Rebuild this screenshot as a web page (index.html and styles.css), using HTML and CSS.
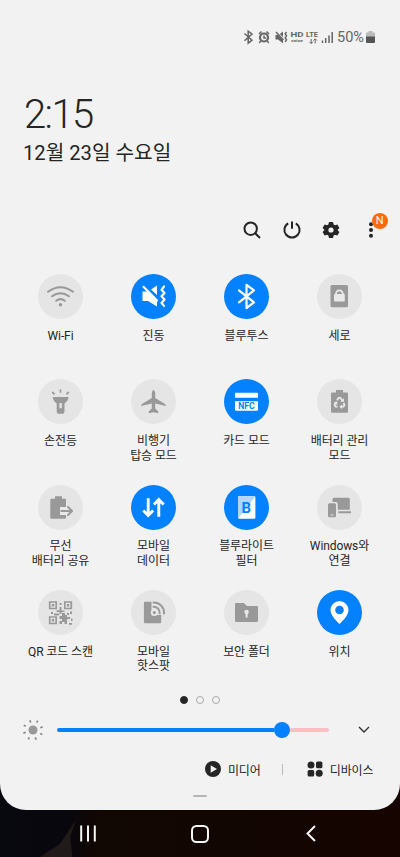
FILE: index.html
```html
<!DOCTYPE html>
<html lang="ko">
<head>
<meta charset="utf-8">
<title>빠른 설정</title>
<link rel="stylesheet" href="styles.css">
</head>
<body>
<div class="screen">
<main class="panel">
  <div class="status">
    <svg class="status-icons" width="93" height="18" viewBox="0 0 93 18" fill="none" stroke="#666" stroke-width="1.5">
      <path d="M1.500 5.500 9 12.200 5.200 15.200V3.200L9 6 1.500 12.800"/>
      <circle cx="21" cy="9.500" r="4" stroke-width="2.200"/><path d="M21 7.500v2.500h2M16 6l2.500-2.500M26 6l-2.500-2.500M17.800 13l-1.500 2M24.200 13l1.500 2"/>
      <path d="M32.500 7H35l5 5v3.200L35 11.500h-2.500zM36.800 6 40 3.500V9z" fill="#666" stroke="none"/><path d="M33 4l7.500 8M43.500 4l-1.300 1.800 1.300 2-1.300 2 1.300 2-1.300 2"/>
      <path d="M68.200 11v4.500M66.500 13.800l1.700 1.700 1.700-1.700M72.200 15.500V11M70.500 12.500l1.700-1.700 1.700 1.700" stroke-width="1"/>
      <path d="M79.500 12.500v2.500M82.700 10v5M86 7.500V15M89.200 4V15"/>
      <text class="tiny-hd" x="47.500" y="9" textLength="13" lengthAdjust="spacingAndGlyphs">HD</text><text class="tiny-voice" x="48" y="13.800" textLength="12" lengthAdjust="spacingAndGlyphs">voice</text>
      <text class="tiny-lte" x="63" y="9" textLength="12" lengthAdjust="spacingAndGlyphs">LTE</text>
    </svg>
    <span class="percent">50%</span>
    <svg width="9" height="13" viewBox="0 0 9 13"><path d="M2.500 0h4v1.500H9V6H0V1.500h2.500z" fill="#bbb"/><path d="M0 5.500h9V11q0 1-1 1H1q-1 0-1-1z" fill="#555"/></svg>
  </div>
  <div class="time">2:15</div>
  <div class="date">12월 23일 수요일</div>
  <nav class="actions">
    <svg viewBox="0 0 20 20"><circle cx="8.700" cy="8.700" r="6.200"/><path d="M13.200 13.200 18 18"/></svg>
    <svg viewBox="0 0 20 20"><path d="M6.200 3.300a7.600 7.600 0 1 0 7.600 0M10 1.500v7.200"/></svg>
    <svg viewBox="0 0 20 20"><path class="solid" fill-rule="evenodd" d="M8 2h4l.6 2.400 1.500.9 2.300-.7 2 3.400-1.700 1.700v.6l1.700 1.700-2 3.400-2.300-.7-1.500.9L12 18H8l-.6-2.400-1.500-.9-2.300.7-2-3.400 1.700-1.700v-.6L1.600 8l2-3.400 2.300.7 1.500-.9zM10 7.400a2.600 2.600 0 1 0 0 5.200 2.600 2.600 0 0 0 0-5.200z"/></svg>
    <div class="more"><svg viewBox="0 0 20 20"><g class="solid"><circle cx="10" cy="4.300" r="2"/><circle cx="10" cy="10" r="2"/><circle cx="10" cy="15.800" r="2"/></g></svg><span class="badge">N</span></div>
  </nav>
  <section class="tiles">
    <div class="tile"><svg class="disc" viewBox="0 0 45 45"><g class="line"><path d="M10 17.700Q22.500 8.700 35 17.700M14 22.300Q22.500 16.200 31 22.300M18.200 26.800Q22.500 23.500 26.800 26.800"/></g><circle cx="22.500" cy="30.700" r="1.700"/></svg><span>Wi-Fi</span></div>
    <div class="tile on"><svg class="disc" viewBox="0 0 45 45"><path d="M11.500 17.500H16l10 9.700v5.300l-9-5.500h-5.500zM20 15.500l6-4V21z"/><path class="line" d="M12.500 12.800 26 26.500M33 12.500l-2.500 3.300L33.500 19l-3 3.300 3 3.300-3 3.300 2.500 3"/></svg><span>진동</span></div>
    <div class="tile on"><svg class="disc" viewBox="0 0 45 45"><path class="line" d="M15 16.300 30 28.300 22.500 34V10.800L30 16.300 15 28.300"/></svg><span>블루투스</span></div>
    <div class="tile"><svg class="disc" viewBox="0 0 45 45"><rect x="13.500" y="11" width="17.500" height="22.200" rx="1.500"/><rect class="cut" x="17" y="20" width="10.800" height="7.500" rx="1"/><path class="cutline" d="M19 21v-1.300a3.400 3.400 0 0 1 6.800 0V21"/></svg><span>세로</span></div>

    <div class="tile"><svg class="disc" viewBox="0 0 45 45"><path fill-rule="evenodd" d="M14.700 18h15.800q0 3.500-4 6.500v8q0 2.200-2 2.200h-3.800q-2 0-2-2.200v-8q-4-3-4-6.500zM21.400 24v5.300h2.400V24z"/><path class="line thin" d="M22.500 11v2M14.600 13.300l1.500 1.600M30.400 13.300l-1.500 1.600"/></svg><span>손전등</span></div>
    <div class="tile"><svg class="disc" viewBox="0 0 45 45"><path d="M22.500 10.800q1.700 1 1.700 3.500V19L34 25q1 .8.800 2L24.200 24.500v5l3 2.700v2l-4.700-1-4.700 1v-2l3-2.700v-5L10.200 27q-.2-1.200.8-2l9.800-6v-4.700q0-2.500 1.700-3.500z"/></svg><span>비행기<br>탑승 모드</span></div>
    <div class="tile on"><svg class="disc" viewBox="0 0 45 45"><path d="M12 13.700h21q1 0 1 1v4.100H11v-4.100q0-1 1-1zM11 22.200h23v8.500q0 1-1 1H12q-1 0-1-1z"/><text class="nfc" x="14.300" y="30.300" textLength="16.400" lengthAdjust="spacingAndGlyphs">NFC</text></svg><span>카드 모드</span></div>
    <div class="tile"><svg class="disc" viewBox="0 0 45 45"><path d="M19 11h7v2.500h4q1 0 1 1v18.200q0 1-1 1H15q-1 0-1-1V14.500q0-1 1-1h4z"/><path class="cutline" d="M20 21.300l1.600-2.500h1.800l2 3M26.500 24l1 1.800-1 1.900h-2.500M20.500 27.700h-2l-1-1.900 1.200-2"/><path class="cut" d="M27 19.300v3.500h-3.700zM25 25.400v4.700l-2.600-2.400zM16.700 23.300l3.400-.8.400 3.400z"/></svg><span>배터리 관리<br>모드</span></div>

    <div class="tile"><svg class="disc" viewBox="0 0 45 45"><path d="M17 11.300h7v2.500h3q1 0 1 1v18q0 1-1 1H13.300q-1 0-1-1v-18q0-1 1-1H17z"/><path class="cut" d="M22 22h8v8h-8z"/><path class="line" d="M23.300 26h10.500M30 22l4 4-4 4"/></svg><span>무선<br>배터리 공유</span></div>
    <div class="tile on"><svg class="disc" viewBox="0 0 45 45"><path class="line heavy" d="M17.200 13.300v16.200M12.300 25.500l4.900 4.900 4.900-4.900M27.800 31.700V15.200M22.900 19.500l4.900-4.900 4.900 4.900"/></svg><span>모바일<br>데이터</span></div>
    <div class="tile on"><svg class="disc" viewBox="0 0 45 45"><rect x="14" y="11.300" width="17.400" height="22.400" rx="1.200"/><path class="pale" d="M15.200 11.300h16.200L14 33.700V12.500q0-1.200 1.200-1.200z"/><text class="letter-b" x="17.600" y="27.600">B</text></svg><span>블루라이트<br>필터</span></div>
    <div class="tile"><svg class="disc" viewBox="0 0 45 45"><path d="M17 12.700h14.300q1.500 0 1.500 1.500v10.500H20.700V19q0-2-2-2h-3.200v-2.800q0-1.500 1.500-1.500zM21.300 26.200H34v2H21.300z"/><path fill-rule="evenodd" d="M12.500 18.300h5q1.500 0 1.500 1.500v11q0 1.500-1.500 1.500h-5q-1.500 0-1.500-1.500v-11q0-1.500 1.500-1.500zM13.500 29.500v1h3v-1z"/></svg><span>Windows와<br>연결</span></div>

    <div class="tile"><svg class="disc" viewBox="0 0 45 45"><path class="qr" d="M11.700 12h6.500v6.500h-6.500zM26.800 12h6.500v6.500h-6.500zM11.700 27h6.500v6.500h-6.500z"/><path d="M13.800 14h2.400v2.400h-2.400zM28.900 14h2.400v2.400h-2.400zM13.800 29h2.400v2.400h-2.400zM21.500 13h2v2h-2zM21.500 17h2v3.500h3V22h-3v2h-2v-2h-3v-1.800h3zM13 22h2v2h-2zM16 23.500h5v2h-5zM24 23h3v2h2v-2h2v2h-2v2h3v2h-3v2h2v2h3v1.800h-3V31h-2v3h-2.500v-2H24v2h-2.500v-3H24v-2h-2.500v-3H24zM32 21.500h2V24h-2zM33 28.500h1.500v2.500H33z"/></svg><span>QR 코드 스캔</span></div>
    <div class="tile"><svg class="disc" viewBox="0 0 45 45"><path d="M14.200 11.700h6.300V22q0 3 3 3h6.700v7q0 1.300-1.300 1.300H14.200q-1.300 0-1.300-1.300V13q0-1.300 1.300-1.300z"/><circle class="cut" cx="23.300" cy="22.500" r="3.500"/><circle cx="23.300" cy="22.500" r="1.600"/><path class="line" d="M22.500 16.800a6 6 0 0 1 6.200 6.500M22.500 12.500a10.200 10.200 0 0 1 10.500 11"/></svg><span>모바일<br>핫스팟</span></div>
    <div class="tile"><svg class="disc" viewBox="0 0 45 45"><path d="M12.300 13h7.500l3.200 3h9.700q1.300 0 1.300 1.300v13.400q0 1.300-1.300 1.300H12.300q-1.300 0-1.300-1.300V14.300q0-1.300 1.300-1.300z"/><circle class="cut" cx="22.600" cy="22" r="2.200"/><path class="cut" d="M21.600 22h2v5.500h-2z"/></svg><span>보안 폴더</span></div>
    <div class="tile on"><svg class="disc" viewBox="0 0 45 45"><path fill-rule="evenodd" d="M22.500 11a9 9 0 0 1 9 9c0 5-5 10-9 14-4-4-9-9-9-14a9 9 0 0 1 9-9zM22.500 15.700a4.300 4.300 0 1 0 0 8.600 4.300 4.300 0 0 0 0-8.600z"/></svg><span>위치</span></div>
  </section>
  <div class="pages"><i class="current"></i><i></i><i></i></div>
  <div class="brightness">
    <svg class="sun" width="22" height="22" viewBox="0 0 22 22"><circle cx="11" cy="11" r="4.500" fill="#999"/><path d="M7.900 1.300l.8 2.300M15.700 1.600l-1 2.100M20.600 7.900l-2.300.8M20.300 15.600l-2.100-1M14.100 20.700l-.8-2.300M6.300 20.400l1-2.100M1.400 14.100l2.300-.8M1.700 6.300l2.100 1" stroke="#888" stroke-width="1.700"/></svg>
    <div class="track"><div class="fill"></div><div class="knob"></div><div class="rest"></div></div>
    <svg class="chevron" width="12" height="8" viewBox="0 0 12 8"><path d="M1 1l5 5 5-5" fill="none" stroke="#333" stroke-width="1.400"/></svg>
  </div>
  <div class="links">
    <svg width="16" height="16" viewBox="0 0 16 16"><circle cx="8" cy="8" r="8" fill="#252525"/><path d="M5.700 4.200 12 8l-6.300 3.800z" fill="#f2f2f2"/></svg>
    <span>미디어</span><i class="divider"></i>
    <svg width="16" height="16" viewBox="0 0 16 16" fill="#252525"><circle cx="4" cy="4" r="3.500"/><rect x="9" y=".6" width="6.400" height="6.600" rx="1.500"/><rect x=".6" y="9" width="6.600" height="6.400" rx="1.500"/><circle cx="12.200" cy="12.200" r="3.500"/></svg>
    <span>디바이스</span>
  </div>
  <div class="handle"></div>
</main>
<footer class="navbar">
  <svg width="16" height="17" viewBox="0 0 16 17"><path d="M1.200.5v16M8 .5v16M14.800.5v16"/></svg>
  <svg class="home" width="18" height="18" viewBox="0 0 18 18"><rect x="1" y="1" width="16" height="16" rx="4.500"/></svg>
  <svg width="10" height="17" viewBox="0 0 10 17"><path d="M9 1 1.500 8.500 9 16"/></svg>
</footer>
</div>
</body>
</html>
```
FILE: styles.css
```css
* { box-sizing: border-box; }
body { margin: 0; font-family: Roboto, "Noto Sans CJK KR", sans-serif; color: #252525; }
.screen {
  height: 857px; overflow: hidden; display: flex; flex-direction: column;
  background: linear-gradient(90deg, #08080f 0, #08070d 17%, #110703 24%, #120602 60%, #160400 100%);
}
.panel { height: 810px; flex: none; background: #f2f2f2; border-radius: 0 0 26px 26px; display: flex; flex-direction: column; }
.status { display: flex; align-items: center; height: 18px; margin: 28px 25px 0 0; justify-content: flex-end; color: #666; }
.status-icons { flex: none; }
.status text { fill: #666; stroke: none; font-weight: 700; }
.tiny-hd { font-size: 7.5px; }
.tiny-voice { font-size: 3.8px; }
.tiny-lte { font-size: 7.5px; }
.percent { font-size: 14.5px; width: 29px; margin-left: 1px; white-space: nowrap; }
.time { font-size: 40px; font-weight: 300; line-height: 44px; height: 44px; margin: 47px 0 0 24px; letter-spacing: -1.6px; }
.date { font-size: 20.2px; line-height: 28px; margin: 2px 0 0 23px; height: 28px; white-space: nowrap; }
.actions { display: flex; gap: 19.8px; margin: 52.5px 0 0 241.8px; height: 20px; }
.actions svg { width: 20px; height: 20px; display: block; fill: none; stroke: #252525; stroke-width: 2; }
.actions .solid { fill: #252525; stroke: none; }
.more { position: relative; width: 20px; }
.badge { position: absolute; left: 10.5px; top: -7px; width: 16px; height: 16px; border-radius: 50%; background: #fb6b0b; color: #fff; font-size: 11px; line-height: 16px; text-align: center; }
.tiles { display: grid; grid-template-columns: repeat(4, 93px); grid-template-rows: repeat(4, 105.4px); margin: 34.5px 0 0 14px; height: 421.6px; }
.tile { display: flex; flex-direction: column; align-items: center; font-size: 12px; line-height: 14.5px; text-align: center; white-space: nowrap; letter-spacing: -.1px; }
.disc { width: 45px; height: 45px; border-radius: 50%; background: #e5e5e5; fill: #999; margin-bottom: 9.7px; flex: none; letter-spacing: 0; }
.on .disc { background: #0381fe; fill: #fff; }
.line { fill: none; stroke: #999; stroke-width: 2; stroke-linecap: round; stroke-linejoin: round; }
.on .line { stroke: #fff; stroke-width: 2.2; }
.line.thin { stroke-width: 1.7; }
.on .line.heavy { stroke-width: 2.9; stroke-linecap: butt; stroke-linejoin: miter; }
.cut { fill: #e9e9e9; }
.cutline { fill: none; stroke: #e9e9e9; stroke-width: 1.8; }
.qr { fill: none; stroke: #999; stroke-width: 1.7; }
.on .nfc { font-size: 8.8px; font-weight: 700; fill: #0381fe; }
.on .letter-b { font-size: 15px; font-weight: 700; fill: #0381fe; }
.pale { fill: #b0d7ff; }
.pages { display: flex; gap: 8px; justify-content: center; height: 8px; margin-top: .4px; }
.pages i { width: 8px; height: 8px; border: 1.5px solid #aaa; border-radius: 50%; }
.pages .current { background: #252525; border-color: #252525; }
.brightness { display: flex; align-items: center; height: 22px; margin: 15px 30px 0 22px; }
.track { display: flex; align-items: center; width: 272px; margin-left: 13px; height: 17px; }
.fill { width: 217px; height: 3.5px; background: #0381fe; border-radius: 2px 0 0 2px; }
.knob { width: 16px; height: 16px; border-radius: 50%; background: #0381fe; }
.rest { flex: 1; height: 3.5px; background: #fabfc0; border-radius: 0 2px 2px 0; }
.chevron { margin-left: auto; }
.links { display: flex; align-items: center; justify-content: flex-end; font-size: 12px; height: 20px; margin: 18.5px 26.5px 0 0; white-space: nowrap; letter-spacing: -.1px; }
.links span { margin-left: 7px; }
.divider { width: 1px; height: 11px; background: #bbb; margin: 0 24px 0 21px; }
.handle { width: 14px; height: 2px; border-radius: 1px; background: #b5b5b5; margin: 16px auto 0; }
.pages, .brightness, .links, .handle { flex: none; }
.navbar { position: relative; height: 47px; display: flex; align-items: center; padding: 0 84px 0 80px; justify-content: space-between; }
.navbar::before { content: ""; position: absolute; left: 40px; top: 10px; width: 36px; height: 37px; background: #211a1a; clip-path: polygon(100% 0, 84% 45%, 90% 100%, 0 100%, 55% 65%); }
.navbar svg { position: relative; fill: none; stroke: #f5f5f5; stroke-width: 2; }
.navbar .home { left: -1.2px; }
```
